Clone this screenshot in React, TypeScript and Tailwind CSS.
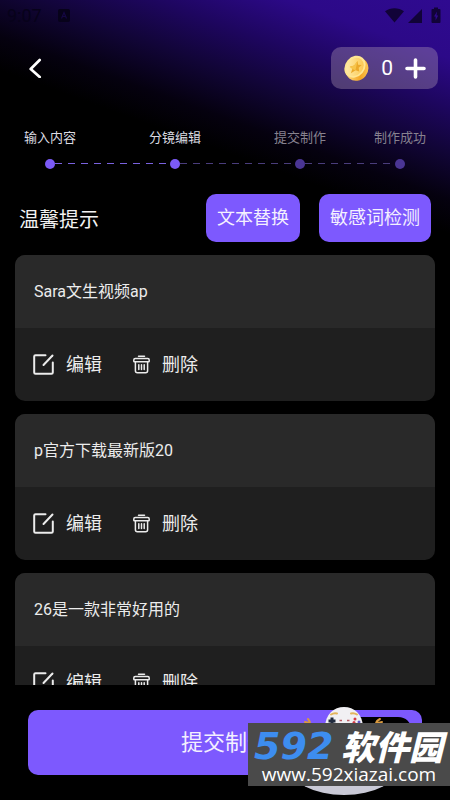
const steps = [
  { label: '输入内容', reached: true, line: 'active' },
  { label: '分镜编辑', reached: true, line: 'idle' },
  { label: '提交制作', reached: false, line: 'idle' },
  { label: '制作成功', reached: false, line: 'none' },
];

const scenes = ['Sara文生视频ap', 'p官方下载最新版20', '26是一款非常好用的'];

function StatusBar() {
  return (
    <div className="flex h-[31px] shrink-0 items-center justify-between pr-[9px] pl-[7px] text-[#07021a]">
      <div className="flex items-center gap-4">
        <span className="text-lg leading-5">9:07</span>
        <svg width="12" height="13" viewBox="0 0 12 13" aria-hidden="true">
          <rect width="12" height="13" rx="2" fill="currentColor" />
          <path d="M3.5 9.5 6 3.5l2.500 6M4.400 7.500h3.200" fill="none" stroke="#150743" strokeWidth="1.200" />
        </svg>
      </div>
      <svg width="57" height="17" viewBox="0 0 57 17" fill="#110338" aria-hidden="true">
        <path d="M1 4.200C6.500.1 14.500.1 20 4.200L10.500 15.500z" />
        <path d="M38 2v14H24z" />
        <path
          fillRule="evenodd"
          d="M50 2V.5h4V2h1.500q1 0 1 1v12q0 1-1 1h-7q-1 0-1-1V3q0-1 1-1zm3 2.500L50 9.500h1.600v4l2.600-5h-1.700z"
        />
      </svg>
    </div>
  );
}

function Coin() {
  return (
    <svg width="26" height="26" viewBox="0 0 26 26" aria-hidden="true">
      <defs>
        <linearGradient id="coin-edge" x1="0" y1="0" x2="1" y2="1">
          <stop offset="0" stopColor="#ffe9a0" />
          <stop offset="0.600" stopColor="#f5a623" />
          <stop offset="1" stopColor="#ffd873" />
        </linearGradient>
        <linearGradient id="coin-face" x1="0" y1="0" x2="1" y2="1">
          <stop offset="0" stopColor="#fff0b8" />
          <stop offset="1" stopColor="#fbc343" />
        </linearGradient>
      </defs>
      <ellipse cx="14" cy="14.200" rx="12" ry="11" transform="rotate(-50 14 14.200)" fill="url(#coin-edge)" />
      <ellipse cx="12" cy="11.700" rx="11.800" ry="9.800" transform="rotate(-50 12 11.700)" fill="#ffe693" />
      <ellipse cx="12" cy="11.900" rx="9.800" ry="7.900" transform="rotate(-50 12 11.900)" fill="url(#coin-face)" />
      <path
        d="m14.500 6 .6 3.800 3.600.1-3 2.900.5 3.700-3.600-1.300-4.700 3.100 1.500-4.500-2.600-2.100 4.400-1.100z"
        fill="#eba92b"
      />
      <path d="m14.500 6-2.100 9.500-3.300-1.700-2.300-2.100 4.400-1.100z" fill="#f6c44a" />
    </svg>
  );
}

function Header() {
  return (
    <header className="flex h-[42px] shrink-0 items-center justify-between pr-3 pl-[23px]">
      <button type="button" aria-label="返回" className="flex h-6 w-6 items-center justify-center text-white">
        <svg width="14" height="20" viewBox="0 0 14 20" fill="none" stroke="currentColor" strokeWidth="2.700" strokeLinecap="round" strokeLinejoin="round">
          <path d="M11.700 2 2.700 11l9 8" />
        </svg>
      </button>
      <button type="button" aria-label="金币 0" className="flex h-full items-center rounded-[10px] bg-[#b9a5b9]/35 px-3 text-white">
        <Coin />
        <span className="ml-3 text-[21px] leading-6">0</span>
        <svg className="ml-3" width="21" height="21" viewBox="0 0 21 21" fill="none" stroke="currentColor" strokeWidth="3.600" strokeLinecap="round" aria-hidden="true">
          <path d="M10.500 2v17M2 10.500h17" />
        </svg>
      </button>
    </header>
  );
}

function Steps() {
  return (
    <ol className="mt-[39px] grid shrink-0 grid-cols-[5fr_5fr_4fr_50px] px-[25px]">
      {steps.map((step) => (
        <li key={step.label}>
          <div className={`flex w-[50px] justify-center text-[13px] leading-5 whitespace-nowrap ${step.reached ? 'text-[#dcdce2]' : 'text-[#87828f]'}`}>
            {step.label}
          </div>
          <div className="mt-[10px] ml-5 flex h-[11px] items-center">
            <span className={`h-[10px] w-[10px] rounded-full ${step.reached ? 'bg-[#7b5af6]' : 'bg-[#4a3594]'}`} />
            {step.line === 'active' && (
              <span className="-mr-5 h-px flex-1 bg-[repeating-linear-gradient(90deg,#7a62e0_0_7px,transparent_7px_13px)]" />
            )}
            {step.line === 'idle' && (
              <span className="-mr-5 h-px flex-1 bg-[repeating-linear-gradient(90deg,#4a3d7c_0_7px,transparent_7px_13px)]" />
            )}
          </div>
        </li>
      ))}
    </ol>
  );
}

function EditIcon() {
  return (
    <svg width="21" height="21" viewBox="0 0 21 21" fill="none" stroke="currentColor" strokeWidth="2" strokeLinecap="round" strokeLinejoin="round" aria-hidden="true">
      <path d="M12.500 1.200H2.500q-1.300 0-1.300 1.300v16q0 1.300 1.300 1.300h16q1.300 0 1.300-1.300V8.500" />
      <path d="m10.500 11 9-9.500" />
    </svg>
  );
}

function TrashIcon() {
  return (
    <svg width="17" height="19" viewBox="0 0 17 19" fill="none" stroke="currentColor" strokeWidth="1.500" strokeLinecap="round" strokeLinejoin="round" aria-hidden="true">
      <path d="M5.500 1.200h6" />
      <path d="M2.200 3.500h12.600q1.400 0 1.400 1.400v1.300q0 .6-.6.6H1.400q-.6 0-.6-.6V4.900q0-1.400 1.400-1.400z" />
      <path d="M2.400 7v8.800q0 2 2 2h8.200q2 0 2-2V7" />
      <path d="M5.800 9.800v4.700M8.500 9.800v4.700M11.200 9.800v4.700" />
    </svg>
  );
}

function SceneCard({ text }: { text: string }) {
  return (
    <li className="shrink-0 overflow-hidden rounded-[10px] bg-[#1f1f1f] text-[#ececec]">
      <p className="flex h-[73px] items-center bg-[#292929] px-[19px] text-base">{text}</p>
      <div className="flex h-[73px] items-center gap-[31px] px-[18px] text-lg leading-6">
        <button type="button" className="flex items-center gap-3">
          <EditIcon />
          编辑
        </button>
        <button type="button" className="flex items-center gap-3">
          <TrashIcon />
          删除
        </button>
      </div>
    </li>
  );
}

function Mascot() {
  return (
    <svg className="pointer-events-none absolute right-[34px] bottom-[4px]" width="122" height="90" viewBox="0 0 122 90" aria-hidden="true">
      <path d="M50 11h54q12 0 14 14H50z" fill="#000" />
      <ellipse cx="50" cy="60" rx="55" ry="29" fill="#c9c9d6" />
      <path d="M31 22C31 8 40 1 50 1s19 7 19 21z" fill="#f1f0f3" />
      <path d="M37 8.500q3-2 6-1M57 7.500q3-1 6 1" fill="none" stroke="#e3b45c" strokeWidth="2" strokeLinecap="round" />
      <path d="M38 11.500v7M34.500 15h7" stroke="#222c3f" strokeWidth="3" />
      <path d="M45.500 14.500h2.500M53 14.500h2.500" stroke="#bb5b63" strokeWidth="1.500" />
      <circle cx="61" cy="13" r="1.500" fill="#d33c45" />
      <circle cx="65" cy="16" r="1.500" fill="#5d54c4" />
      <circle cx="60" cy="16.500" r="1.500" fill="#d33c45" />
      <path d="M16 18q0-3-2-5m1 4-4-1M82 18q0-3 4-5m-2 4 4-1" fill="none" stroke="#d99a3f" strokeWidth="2" strokeLinecap="round" />
    </svg>
  );
}

function Watermark() {
  return (
    <div className="absolute right-0 bottom-[14px] flex h-[63px] w-[202px] flex-col justify-end bg-[#4a4a4a] pb-[2px] whitespace-nowrap text-white">
      <div className="flex items-center justify-between pr-[7px] pl-[6px] italic">
        <span className="font-['DejaVu_Sans',sans-serif] text-[38px] leading-9 font-bold text-[#3d8df0]">592</span>
        <span className="font-['Noto_Sans_CJK_SC',sans-serif] text-[34px] leading-9 font-black">软件园</span>
      </div>
      <div className="text-center font-['Open_Sans',sans-serif] text-[19px] leading-5 font-medium">www.592xiazai.com</div>
    </div>
  );
}

export default function App() {
  return (
    <div className="relative flex h-screen flex-col overflow-hidden bg-black bg-[linear-gradient(200deg,#2f0a90_0,#2c0988_55px,#1e0660_100px,#110536_145px,#05010f_188px,#000_220px)] font-['Roboto','Noto_Sans_CJK_SC',sans-serif]">
      <StatusBar />
      <div className="h-4 shrink-0" />
      <Header />
      <Steps />
      <div className="mt-[25px] flex h-12 shrink-0 items-center px-[19px]">
        <h1 className="flex-1 pt-[3px] text-xl text-[#f2f2f2]">温馨提示</h1>
        <div className="flex h-full gap-[19px] text-lg text-[#f4f0ff]">
          <button type="button" className="rounded-[10px] bg-[#7d59fe] px-[11px]">文本替换</button>
          <button type="button" className="rounded-[10px] bg-[#7d59fe] px-[11px]">敏感词检测</button>
        </div>
      </div>
      <ul className="mx-[15px] mt-[13px] flex min-h-0 flex-1 flex-col gap-[13px] overflow-hidden">
        {scenes.map((text) => (
          <SceneCard key={text} text={text} />
        ))}
      </ul>
      <footer className="shrink-0 px-7 py-[25px]">
        <button type="button" className="h-[65px] w-full rounded-[10px] bg-[#7d59fe] text-[22px] text-[#f4f0ff]">提交制作</button>
      </footer>
      <Mascot />
      <Watermark />
    </div>
  );
}
